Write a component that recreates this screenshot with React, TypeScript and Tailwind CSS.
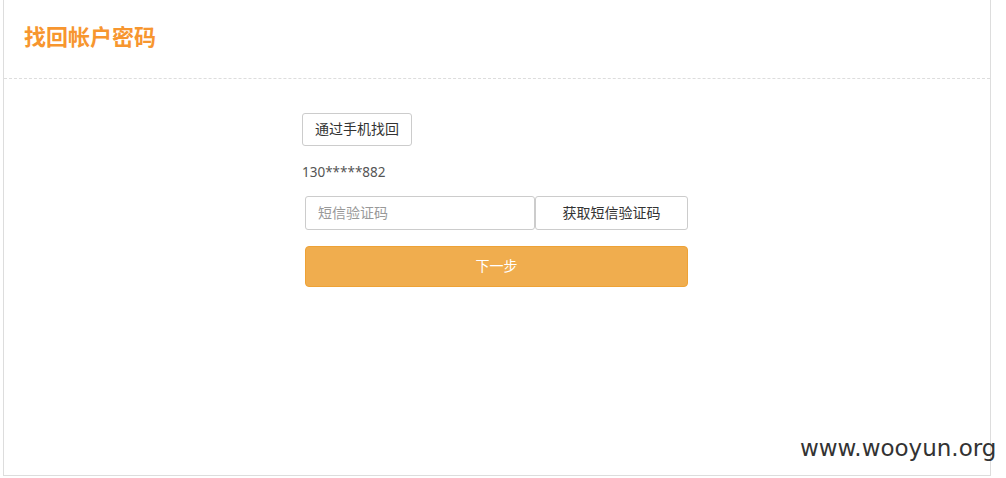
const cjk = "font-['Liberation_Sans','Noto_Sans_CJK_SC',sans-serif]";

function Header() {
  return (
    <div className="h-[79px] border-b border-dashed border-[#dddddd] pl-[20px] flex items-center">
      <h1 className={`${cjk} text-[22px] font-bold text-[#f7962f] leading-none pb-[2px]`}>找回帐户密码</h1>
    </div>
  );
}

function PhoneForm() {
  return (
    <div className={`${cjk} pl-[298px] pt-[34px] text-[14px]`}>
      <button className="h-[33px] w-[110px] border border-[#cccccc] rounded-[3px] bg-white text-[#333333]">
        通过手机找回
      </button>
      <div className="mt-[16px] leading-[20px] text-[#555555] font-['Noto_Sans',sans-serif] text-[13.5px]">130*****882</div>
      <div className="mt-[14px] ml-[3px] flex w-[383px]">
        <input
          placeholder="短信验证码"
          className="h-[34px] w-[230px] border border-[#cccccc] rounded-[3px] px-[12px] text-[14px] placeholder:text-[#999999] outline-none"
        />
        <button className="h-[34px] flex-1 border border-[#cccccc] rounded-[3px] bg-white text-[#333333]">
          获取短信验证码
        </button>
      </div>
      <button className="mt-[16px] ml-[3px] w-[383px] h-[41px] rounded-[4px] bg-[#f0ad4e] border border-[#eea236] text-white">
        下一步
      </button>
    </div>
  );
}

export default function App() {
  return (
    <div className="relative w-[1006px] h-[478px] bg-white overflow-hidden">
      <div className="ml-[3px] w-[988px] h-[476px] border-x border-b border-[#dddddd]">
        <Header />
        <PhoneForm />
      </div>
      <div className="absolute left-[800px] top-[432px] font-['DejaVu_Sans',sans-serif] text-[23px] leading-[32px] text-[#333333]">
        www.wooyun.org
      </div>
    </div>
  );
}
